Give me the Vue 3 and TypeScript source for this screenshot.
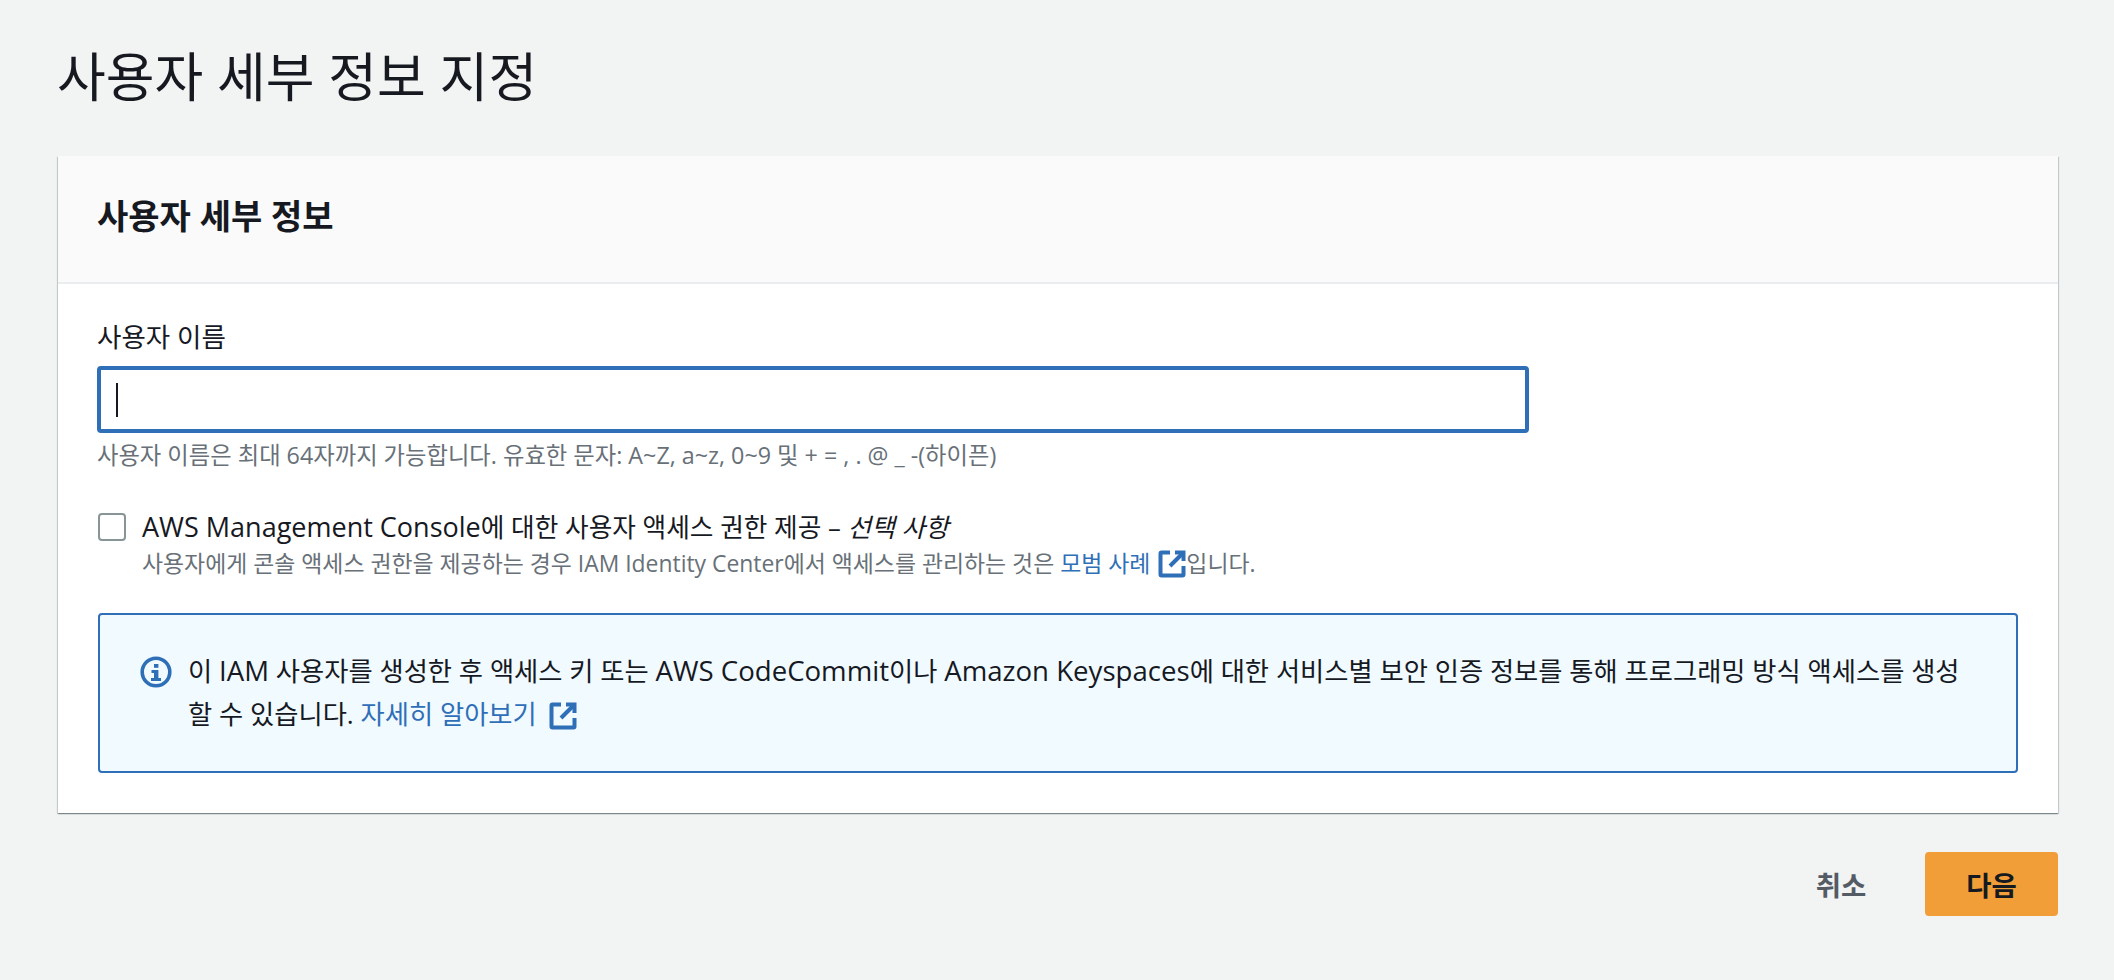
<script setup lang="ts">
const title: string = '사용자 세부 정보 지정'
</script>

<template>
  <main class="page">
    <h1 class="title">{{ title }}</h1>
    <section class="card">
      <header class="card-head"><h2>사용자 세부 정보</h2></header>
      <div class="card-body">
        <label class="field-label" for="uname">사용자 이름</label>
        <div class="input-wrap">
          <input id="uname" class="input" type="text" />
          <span class="caret"></span>
        </div>
        <p class="hint">사용자 이름은 최대 64자까지 가능합니다. 유효한 문자: A~Z, a~z, 0~9 및 + = , . @ _ -(하이픈)</p>
        <div class="check-row">
          <span class="checkbox"></span>
          <div class="check-text">
            <div class="check-label"><span class="en">AWS Management Console</span>에 대한 사용자 액세스 권한 제공 – <em>선택 사항</em></div>
            <div class="check-desc">사용자에게 콘솔 액세스 권한을 제공하는 경우 IAM Identity Center에서 액세스를 관리하는 것은 <a class="link">모범 사례 <svg class="ext ext-tight" viewBox="0 0 28 28"><path d="M12 2.5H3.5a1 1 0 0 0-1 1v21a1 1 0 0 0 1 1h21a1 1 0 0 0 1-1V16" /><path d="M17 2.5h8.5V11" /><path d="M25 3 12 16" /></svg></a>입니다.</div>
          </div>
        </div>
        <div class="alert">
          <svg class="info" viewBox="0 0 32 32">
            <circle cx="16" cy="16" r="13.8" fill="none" stroke="#2f6fb7" stroke-width="3.6" />
            <rect x="14" y="8" width="4.4" height="3.8" fill="#2f6fb7" />
            <path d="M11.5 14h6.9v8h2.6v3H11v-3h3v-5h-2.5z" fill="#2f6fb7" />
          </svg>
          <p class="alert-text">이 <span class="en">IAM</span> 사용자를 생성한 후 액세스 키 또는 <span class="en">AWS CodeCommit</span>이나 <span class="en">Amazon Keyspaces</span>에 대한 서비스별 보안 인증 정보를 통해 프로그래밍 방식 액세스를 생성<br />할 수 있습니다. <a class="link">자세히 알아보기 <svg class="ext ext-wide" viewBox="0 0 28 28"><path d="M12 2.5H3.5a1 1 0 0 0-1 1v21a1 1 0 0 0 1 1h21a1 1 0 0 0 1-1V16" /><path d="M17 2.5h8.5V11" /><path d="M25 3 12 16" /></svg></a></p>
        </div>
      </div>
    </section>
    <footer class="actions">
      <button class="btn btn-text" type="button">취소</button>
      <button class="btn btn-primary" type="button">다음</button>
    </footer>
  </main>
</template>

<style scoped>
.page {
  box-sizing: border-box;
  height: 980px;
  padding: 0 56px 0 58px;
  background: #f2f3f3;
  color: #16191f;
  font-family: "Open Sans", "Noto Sans CJK KR", sans-serif;
  overflow: hidden;
}
.title {
  margin: 0 0 0 -1px;
  height: 156px;
  padding-top: 47px;
  box-sizing: border-box;
  font-size: 53px;
  line-height: 60px;
  font-weight: 400;
}
.card {
  background: #fff;
  box-shadow: 0 1px 1px 0 rgba(0, 28, 36, 0.3), 1px 1px 1px 0 rgba(0, 28, 36, 0.15), -1px 1px 1px 0 rgba(0, 28, 36, 0.15);
}
.card-head {
  box-sizing: border-box;
  height: 128px;
  background: #fafafa;
  border-bottom: 2px solid #eaeded;
  padding: 0 39px 6px;
  display: flex;
  align-items: center;
}
.card-head h2 {
  margin: 0;
  font-size: 34px;
  font-weight: 700;
  line-height: 40px;
}
.card-body {
  padding: 35px 40px 40px 40px;
}
.field-label {
  display: block;
  margin-left: -1px;
  font-size: 26.5px;
  line-height: 36px;
}
.input-wrap {
  position: relative;
  margin: 11px 0 0 -1px;
  width: 1432px;
  height: 67px;
}
.input {
  box-sizing: border-box;
  display: block;
  width: 100%;
  height: 100%;
  border: 4px solid #2f6fb7;
  border-radius: 4px;
  background: #fff;
  outline: none;
}
.caret {
  position: absolute;
  left: 19px;
  top: 17px;
  width: 2px;
  height: 34px;
  background: #16191f;
}
.hint {
  margin: 7px 0 0 -1px;
  font-size: 23.3px;
  line-height: 30px;
  color: #687078;
}
.check-row {
  display: flex;
  margin-top: 38px;
}
.checkbox {
  box-sizing: border-box;
  flex: none;
  width: 28px;
  height: 28px;
  margin-top: 5px;
  border: 2px solid #879596;
  border-radius: 4px;
  background: #fff;
}
.check-text {
  margin-left: 16px;
}
.check-label {
  font-size: 25.7px;
  line-height: 38px;
}
.check-label .en {
  font-size: 27px;
}
.check-desc {
  font-size: 22.9px;
  line-height: 34px;
  color: #687078;
}
.link {
  color: #2f6fb7;
}
.ext {
  width: 28px;
  height: 28px;
  vertical-align: -6px;
  fill: none;
  stroke: #2f6fb7;
  stroke-width: 4;
}
.ext-tight {
  margin-left: 2px;
}
.ext-wide {
  margin-left: 5px;
}
.alert {
  box-sizing: border-box;
  height: 160px;
  margin-top: 32px;
  padding: 34px 30px 0 40px;
  display: flex;
  background: #f1faff;
  border: 2px solid #2f6fb7;
  border-radius: 4px;
}
.info {
  flex: none;
  width: 32px;
  height: 32px;
  margin-top: 7px;
}
.alert-text {
  margin: 0 0 0 16px;
  font-size: 26.3px;
  line-height: 43px;
  white-space: nowrap;
}
.alert-text .en {
  font-size: 27.6px;
}
.actions {
  display: flex;
  justify-content: flex-end;
  align-items: center;
  margin-top: 39px;
}
.btn {
  height: 64px;
  border: none;
  border-radius: 4px;
  font-family: inherit;
  font-size: 27.5px;
  font-weight: 700;
  padding: 0;
}
.btn-text {
  width: 100px;
  margin-right: 34px;
  background: transparent;
  color: #545b64;
}
.btn-primary {
  width: 133px;
  background: #f29e38;
  color: #16191f;
}
</style>
